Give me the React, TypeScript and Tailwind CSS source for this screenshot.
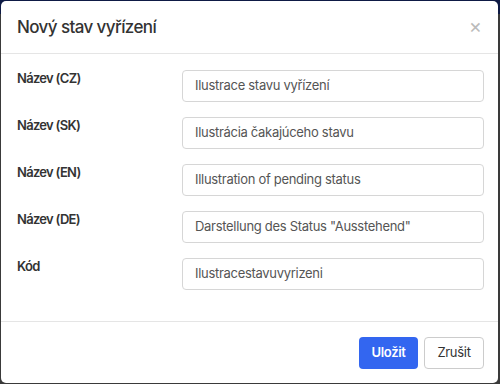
import React from "react";

const rows = [
  { label: "Název (CZ)", value: "Ilustrace stavu vyřízení" },
  { label: "Název (SK)", value: "Ilustrácia čakajúceho stavu" },
  { label: "Název (EN)", value: "Illustration of pending status" },
  { label: "Název (DE)", value: 'Darstellung des Status "Ausstehend"' },
  { label: "Kód", value: "Ilustracestavuvyrizeni" },
];

export default function App() {
  return (
    <div
      className="w-[500px] h-[384px] pl-[1px] pt-[1px] bg-[linear-gradient(to_bottom,#0e1a45_0px,#0e1a45_14px,#3a3a3a_14px,#3a3a3a_100%)] overflow-hidden"
      style={{ fontFamily: "Inter, 'Noto Sans', sans-serif" }}
    >
      <div className="w-[497px] h-[382px] bg-white rounded-[5px] flex flex-col">
        <div className="h-[53px] border-b border-[#e5e5e5] flex items-center justify-between pl-4 pr-[16px] shrink-0">
          <div className="text-[17px] font-medium text-[#333] tracking-[-0.6px] pt-[1px]">Nový stav vyřízení</div>
          <div className="text-[20px] leading-none text-[#bbb] pb-[2px]">×</div>
        </div>
        <div className="flex-1 pt-[16px] pl-4 pr-[14px] flex flex-col gap-[15px]">
          {rows.map((r) => (
            <div key={r.label} className="flex items-start">
              <div className="w-[165px] text-[13px] leading-[16px] font-semibold text-[#333] tracking-[-0.7px]">{r.label}</div>
              <div className="w-[302px] h-[32px] border border-[#d6d6d6] rounded-[4px] flex items-center px-3 text-[13px] text-[#555] tracking-[-0.3px]">
                {r.value}
              </div>
            </div>
          ))}
        </div>
        <div className="h-[62px] border-t border-[#e5e5e5] flex items-center justify-end gap-[6px] pr-[14px] shrink-0">
          <button className="w-[59px] h-[32px] rounded-[4px] bg-[#3366f0] text-white text-[13px] font-semibold tracking-[-0.3px]">Uložit</button>
          <button className="w-[60px] h-[32px] rounded-[4px] bg-white border border-[#ccc] text-[#333] text-[13px] tracking-[-0.3px]">Zrušit</button>
        </div>
      </div>
    </div>
  );
}
